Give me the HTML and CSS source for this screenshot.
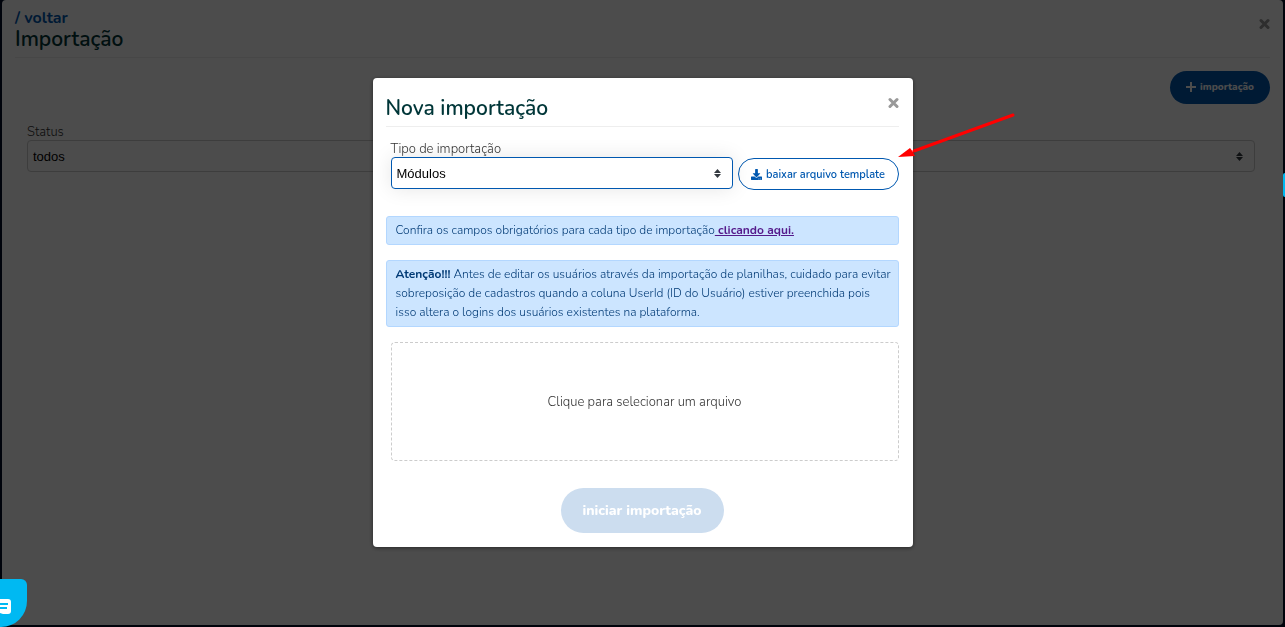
FILE: index.html
```html
<!DOCTYPE html>
<html lang="pt-BR">
<head>
    <meta charset="UTF-8">
    <meta name="viewport" content="width=device-width, initial-scale=1.0">
    <title>Importação</title>
    <link rel="stylesheet" href="styles.css">
</head>
<body>

<main class="page">
    <header class="page-header">
        <div>
            <a class="back-link" href="#">/ voltar</a>
            <h1 class="title">Importação</h1>
        </div>
        <button class="close" type="button" aria-label="Fechar página">
            <svg width="11" height="12" viewBox="0 0 11 12"><path d="M2 2.500L9 9.500M9 2.500L2 9.500"/></svg>
        </button>
    </header>

    <div class="toolbar">
        <button class="btn-add" type="button">
            <svg width="10" height="10" viewBox="0 0 10 10"><path d="M5 0V10M0 5H10"/></svg>
            importação
        </button>
    </div>

    <div class="filter">
        <label class="label" for="status">Status</label>
        <div class="select-box">
            <select class="select" id="status">
                <option>todos</option>
            </select>
            <svg class="carets" width="7" height="9" viewBox="0 0 7 9"><path d="M3.5 0L7 4H0zM3.5 9L7 5H0z"/></svg>
        </div>
    </div>
</main>

<div class="overlay">
    <section class="modal" role="dialog" aria-modal="true" aria-labelledby="modalTitle">
        <header class="modal-header">
            <h2 class="title" id="modalTitle">Nova importação</h2>
            <button class="close" type="button" aria-label="Fechar">
                <svg width="11" height="12" viewBox="0 0 11 12"><path d="M2 2.500L9 9.500M9 2.500L2 9.500"/></svg>
            </button>
        </header>

        <div class="import-type">
            <label class="label" for="importType">Tipo de importação</label>
            <div class="import-row">
                <div class="select-box">
                    <select class="select select-active" id="importType">
                        <option>Módulos</option>
                    </select>
                    <svg class="carets" width="7" height="9" viewBox="0 0 7 9"><path d="M3.5 0L7 4H0zM3.5 9L7 5H0z"/></svg>
                </div>
                <button class="btn-template" type="button">
                    <svg width="11" height="11" viewBox="0 0 512 512"><path d="M216 0h80c13.300 0 24 10.700 24 24v168h87.700c17.800 0 26.700 21.500 14.100 34.100L269.700 378.300c-7.500 7.500-19.800 7.500-27.300 0L90.100 226.100c-12.600-12.600-3.700-34.100 14.100-34.100H192V24c0-13.300 10.700-24 24-24zm296 376v112c0 13.300-10.700 24-24 24H24c-13.300 0-24-10.700-24-24V376c0-13.300 10.700-24 24-24h146.700l49 49c20.100 20.100 52.500 20.100 72.600 0l49-49H488c13.300 0 24 10.700 24 24zm-124 88c0-11-9-20-20-20s-20 9-20 20 9 20 20 20 20-9 20-20zm64 0c0-11-9-20-20-20s-20 9-20 20 9 20 20 20 20-9 20-20z"/></svg>
                    baixar arquivo template
                </button>
            </div>
        </div>

        <p class="alert">Confira os campos obrigatórios para cada tipo de importação<a class="alert-link" href="#"> clicando aqui.</a></p>
        <p class="alert"><strong>Atenção!!!</strong> Antes de editar os usuários através da importação de planilhas, cuidado para evitar sobreposição de cadastros quando a coluna UserId (ID do Usuário) estiver preenchida pois isso altera o logins dos usuários existentes na plataforma.</p>

        <label class="dropzone" for="file">Clique para selecionar um arquivo</label>
        <input class="file-input" type="file" id="file">

        <button class="btn-start" type="submit" disabled>iniciar importação</button>
    </section>
</div>

<svg class="arrow" width="118" height="48" viewBox="0 0 118 48">
    <path d="M115 2L16 38" stroke="#f00" stroke-width="3" stroke-linecap="round"/>
    <path d="M0 44L12 35L15 39L17 43z" fill="#f00"/>
</svg>

<button class="chat" type="button" aria-label="Chat">
    <svg width="12" height="16" viewBox="0 0 12 16">
        <path d="M0 0H8Q11 0 11 3V12Q11 15 8 15H3L0 14z" fill="#fff"/>
        <path d="M0 5H8M0 9H7" stroke="#00b9f2" stroke-width="2"/>
    </svg>
</button>
<div class="side-tab"></div>

</body>
</html>
```
FILE: styles.css
```css
* {
    box-sizing: border-box;
}
body {
    margin: 0;
    min-height: 100vh;
    padding: 0 2px 2px;
    display: flex;
    background-color: #000d26;
    font-family: Nunito, Lato, sans-serif;
    font-size: 13px;
    font-weight: 300;
    color: #333;
    overflow: hidden;
}
button {
    font-family: inherit;
    font-weight: 800;
    cursor: pointer;
}

/* page */
.page {
    flex: 1;
    padding: 8px 13px;
    background-color: #fff;
    border-radius: 4px;
}
.page-header {
    display: flex;
    justify-content: space-between;
    align-items: flex-start;
    height: 50px;
    border-bottom: 1px solid #eee;
}
.page-header .close {
    margin-top: 10px;
}
.back-link {
    display: block;
    font-size: 16px;
    line-height: 20px;
    font-weight: 700;
    color: #0058b0;
    text-decoration: none;
}
.title {
    margin: 0;
    font-size: 21px;
    line-height: 22px;
    font-weight: 600;
    color: #003638;
}
.close {
    display: flex;
    padding: 0;
    border: 0;
    background: none;
}
.close path {
    stroke: #999;
    stroke-width: 3;
    stroke-linecap: round;
}
.toolbar {
    display: flex;
    justify-content: flex-end;
    padding-top: 13px;
}
.btn-add {
    display: flex;
    align-items: center;
    justify-content: center;
    gap: 4px;
    width: 100px;
    height: 33px;
    padding: 0 0 2px;
    border: 0;
    border-radius: 17px;
    background-color: #0058b0;
    color: #fff;
    font-size: 10px;
}
.btn-add path {
    stroke: #fff;
    stroke-width: 2;
}
.filter {
    padding: 20px 15px 0 12px;
}

/* fields */
.label {
    display: block;
    line-height: 16px;
}
.select-box {
    position: relative;
    flex: 1;
}
.select {
    appearance: none;
    display: block;
    width: 100%;
    height: 32px;
    padding: 0 5px;
    border: 1px solid #ccc;
    border-radius: 4px;
    background-color: #fff;
    color: #000;
    font-family: "Liberation Sans", Arial, sans-serif;
    font-size: 13px;
}
.select-active {
    border-color: #0058b0;
    box-shadow: 0 0 20px rgba(0, 0, 0, 0.1);
}
.carets {
    position: absolute;
    right: 12px;
    top: 12px;
    fill: #343a40;
    pointer-events: none;
}

/* modal */
.overlay {
    position: fixed;
    inset: 0;
    display: flex;
    align-items: center;
    justify-content: center;
    padding-bottom: 2px;
    background-color: rgba(0, 0, 0, 0.7);
}
.modal {
    width: 540px;
    padding: 18px 14px 14px 13px;
    background-color: #fff;
    border-radius: 4px;
    box-shadow: 0 1px 4px rgba(0, 0, 0, 0.5);
}
.modal-header {
    display: flex;
    justify-content: space-between;
    align-items: flex-start;
    height: 31px;
    padding-top: 1px;
    border-bottom: 1px solid #eee;
}
.import-type {
    margin-bottom: 26px;
    padding: 14px 0 0 5px;
}
.import-row {
    display: flex;
    gap: 5px;
}
.btn-template {
    display: flex;
    align-items: center;
    justify-content: center;
    gap: 4px;
    width: 161px;
    height: 32px;
    margin-top: 1px;
    padding: 0;
    border: 1px solid #0058b0;
    border-radius: 16px;
    background-color: #fff;
    color: #0058b0;
    font-size: 11px;
    font-weight: 600;
}
.btn-template svg {
    fill: #0058b0;
}
.alert {
    margin: 0 0 15px;
    padding: 4px 5px 4px 9px;
    border: 1px solid #b3d7ff;
    border-radius: 3px;
    background-color: #cce5ff;
    color: #003a75;
    font-size: 12px;
    line-height: 19px;
}
.alert strong {
    font-weight: 700;
}
.alert-link {
    color: #551a8b;
    font-weight: 700;
}
.dropzone {
    display: flex;
    align-items: center;
    justify-content: center;
    height: 119px;
    margin-left: 5px;
    border: 1px dashed #ccc;
    border-radius: 4px;
    cursor: pointer;
}
.file-input {
    position: absolute;
    width: 1px;
    height: 1px;
    opacity: 0;
}
.btn-start {
    display: block;
    width: 163px;
    height: 45px;
    margin: 27px auto 0;
    padding: 0;
    border: 0;
    border-radius: 23px;
    background-color: #ccddef;
    color: #fff;
    font-size: 14px;
    cursor: default;
}

/* floating items */
.arrow {
    position: absolute;
    left: 898px;
    top: 113px;
}
.chat {
    position: fixed;
    left: 0;
    bottom: 0;
    display: flex;
    align-items: center;
    width: 27px;
    height: 48px;
    padding: 8px 0 0;
    border: 0;
    border-radius: 0 6px 26px 0;
    background-color: #00b9f2;
}
.side-tab {
    position: fixed;
    right: 0;
    top: 173px;
    width: 2px;
    height: 24px;
    border-radius: 2px 0 0 2px;
    background-color: #00b9f2;
}
```
